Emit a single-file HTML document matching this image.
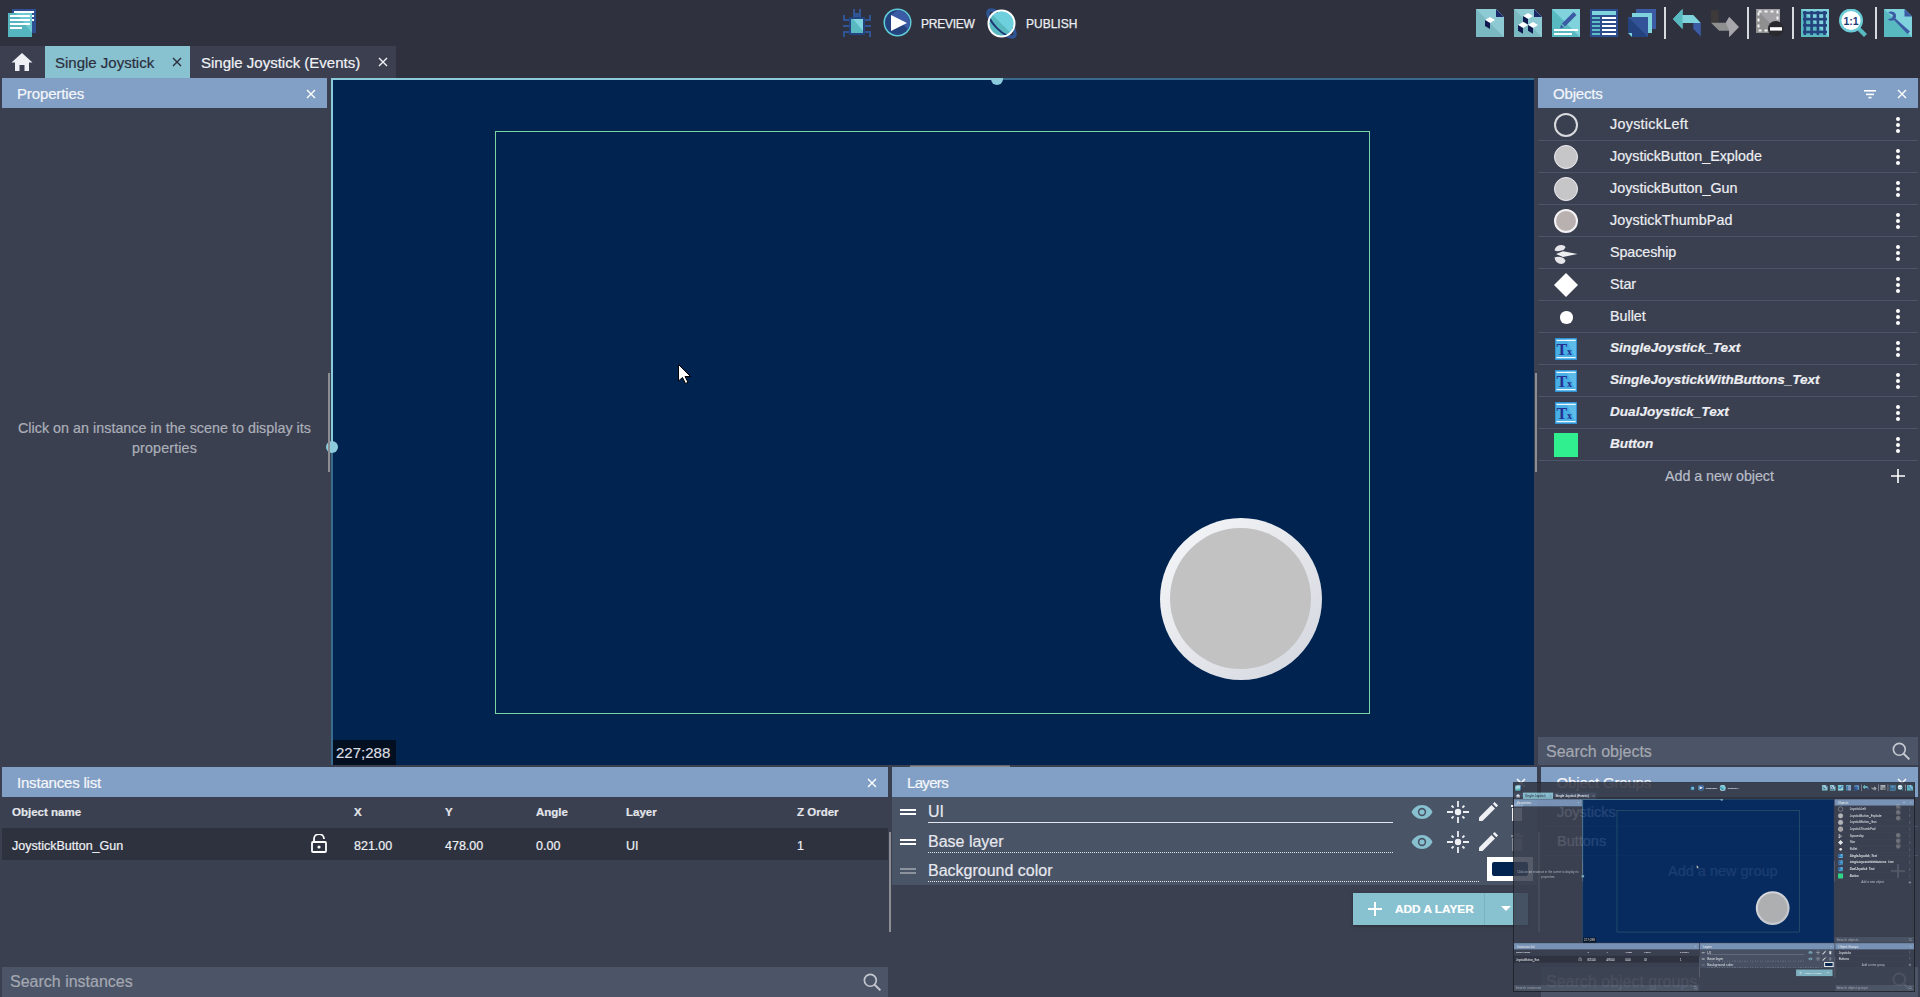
<!DOCTYPE html>
<html><head><meta charset="utf-8"><style>*{box-sizing:border-box;margin:0;padding:0}
html,body{width:1920px;height:997px;overflow:hidden;background:#2f323e;font-family:"Liberation Sans",sans-serif}
.app{position:absolute;left:0;top:0;width:1920px;height:997px;background:#2f323e;overflow:hidden}
.abs{position:absolute}
.t{position:absolute;white-space:nowrap;line-height:1;-webkit-text-stroke:.2px currentColor}
.hdr{position:absolute;background:#82a0c5;height:30px}
.hdr .t{color:#f4f6fa}
.panel{position:absolute;background:#3b4051}
.x{position:absolute;width:10px;height:10px}
.sep{position:absolute;height:1px;background:#4b5569}
.dots{position:absolute;width:4px;height:16px}
</style></head><body>
<svg width="0" height="0" style="position:absolute">
<defs>
<symbol id="ix" viewBox="0 0 10 10"><path d="M1 1L9 9M9 1L1 9" stroke="currentColor" stroke-width="1.4" fill="none"/></symbol>
<symbol id="idots" viewBox="0 0 4 16"><circle cx="2" cy="2" r="2" fill="#fff"/><circle cx="2" cy="8" r="2" fill="#fff"/><circle cx="2" cy="14" r="2" fill="#fff"/></symbol>
<symbol id="itx" viewBox="0 0 24 24"><rect x="0" y="0" width="24" height="24" fill="#2f8fd0"/><rect x="1" y="1" width="22" height="22" fill="#47aee6"/><path d="M12 1h11v22z" fill="#5cbbe9"/><rect x="1.5" y="2" width="21" height="1.3" fill="#eef7fc"/><rect x="1.5" y="20.7" width="21" height="1.3" fill="#eef7fc"/><text x="1.5" y="18" font-family="Liberation Serif" font-size="17.5" font-weight="bold" fill="#24318f">T</text><text x="13.2" y="19" font-family="Liberation Serif" font-size="11" font-weight="bold" fill="#24318f">x</text></symbol>
<symbol id="ieye" viewBox="0 0 24 24"><path d="M12 5C7 5 3 8.5 1.5 12 3 15.5 7 19 12 19s9-3.5 10.5-7C21 8.5 17 5 12 5z" fill="#87c1cf"/><circle cx="12" cy="12" r="4.2" fill="#4a5467"/><circle cx="12" cy="12" r="2.6" fill="#87c1cf"/></symbol>
<symbol id="isun" viewBox="0 0 24 24"><circle cx="12" cy="12" r="3.2" fill="#eef0f4"/><path d="M12 1v6M12 17v6M1 12h6M17 12h6" stroke="#eef0f4" stroke-width="1.8"/><path d="M5.6 5.6l2 2M16.4 16.4l2 2M5.6 18.4l2-2M16.4 7.6l2-2" stroke="#eef0f4" stroke-width="2"/></symbol>
<symbol id="ipen" viewBox="0 0 24 24"><path d="M3 21v-3.5L15.5 5l3.5 3.5L6.5 21z" fill="#eef0f4"/><path d="M16.8 3.7l1.8-1.8 3.5 3.5-1.8 1.8z" fill="#eef0f4"/></symbol>
<symbol id="isearch" viewBox="0 0 24 24"><circle cx="9.5" cy="9.5" r="6.8" stroke="#c4c7cf" stroke-width="1.9" fill="none"/><path d="M14.5 14.5L21 21" stroke="#c4c7cf" stroke-width="2.3"/></symbol>
<symbol id="ihome" viewBox="0 0 24 24"><path d="M12 3L1.5 12.5H5V21h4.5v-6h5v6H19v-8.5h3.5z" fill="#eef0f6"/></symbol>
<symbol id="ihandle" viewBox="0 0 16 10"><rect x="0" y="2" width="16" height="2" fill="currentColor"/><rect x="0" y="6" width="16" height="2" fill="currentColor"/></symbol>
</defs>
</svg>

<div class="app"><!-- toolbar -->
<svg class="abs" style="left:7px;top:8px" width="30" height="30" viewBox="0 0 30 30">
 <rect x="5" y="1" width="24" height="24" fill="#2f4f93"/>
 <rect x="7" y="3" width="20" height="2" fill="#fff"/><rect x="25" y="7" width="2" height="2" fill="#fff"/><rect x="25" y="11" width="2" height="2" fill="#fff"/>
 <rect x="1" y="5" width="24" height="24" fill="#56b6bf"/>
 <path d="M9 5h16v20z" fill="#6fcad3"/>
 <rect x="3" y="7" width="20" height="2" fill="#fff"/><rect x="3" y="11" width="20" height="2" fill="#fff"/><rect x="3" y="15" width="20" height="2" fill="#fff"/><rect x="3" y="19" width="12" height="2" fill="#fff"/>
</svg>
<svg class="abs" style="left:843px;top:9px" width="28" height="28" viewBox="0 0 28 28">
 <g fill="#2f5595"><rect x="10" y="0" width="2" height="8"/><rect x="16" y="0" width="2" height="8"/><rect x="10" y="4" width="8" height="5"/>
 <rect x="0" y="6" width="2" height="6"/><rect x="0" y="10" width="6" height="2"/><rect x="26" y="6" width="2" height="6"/><rect x="22" y="10" width="6" height="2"/>
 <rect x="0" y="16" width="6" height="2"/><rect x="22" y="16" width="6" height="2"/>
 <rect x="0" y="22" width="6" height="2"/><rect x="0" y="22" width="2" height="6"/><rect x="22" y="22" width="6" height="2"/><rect x="26" y="22" width="2" height="6"/>
 <rect x="6" y="8" width="16" height="18" fill="#23427f"/></g>
 <rect x="8" y="10" width="12" height="14" fill="#58b9c0"/><path d="M10 10h10v12z" fill="#7fd3dc"/>
</svg>
<svg class="abs" style="left:883px;top:8px" width="29" height="29" viewBox="0 0 29 29">
 <circle cx="14.5" cy="14.5" r="14" fill="#5fcdd8"/><circle cx="14.5" cy="14.5" r="12.5" fill="#24427e"/>
 <path d="M14.5 2A12.5 12.5 0 0 1 25 21L8 7z" fill="#3b5ba4"/>
 <path d="M8 7L24 15 8 23z" fill="#fff"/>
</svg>
<div class="t" style="left:921px;top:18px;font-size:12.0px;letter-spacing:-0.263px;color:#eceef2;-webkit-text-stroke:.25px #eceef2">PREVIEW</div>
<svg class="abs" style="left:986px;top:8px" width="31" height="31" viewBox="0 0 31 31">
 <defs><clipPath id="pclip"><circle cx="15.5" cy="15.5" r="12"/></clipPath></defs>
 <ellipse cx="15.5" cy="15.5" rx="18" ry="6.5" transform="rotate(45 15.5 15.5)" stroke="#2f5595" stroke-width="3.5" fill="none"/>
 <circle cx="15.5" cy="15.5" r="14" fill="#fff"/><circle cx="15.5" cy="15.5" r="11.8" fill="#6dd0dc"/>
 <g clip-path="url(#pclip)"><path d="M0 0L31 31H0z" fill="#58b9c0"/><ellipse cx="15.5" cy="15.5" rx="18" ry="6.5" transform="rotate(45 15.5 15.5)" stroke="#1e3b78" stroke-width="2" fill="none"/><path d="M0 0L31 31L31 0z" fill="#6dd0dc"/><path d="M-5 12L19 36L0 36z" fill="#6dd0dc" opacity="0"/></g>
</svg>
<div class="t" style="left:1026px;top:18px;font-size:12px;color:#eceef2;-webkit-text-stroke:.25px #eceef2">PUBLISH</div>

<svg class="abs" style="left:1476px;top:9px" width="28" height="28" viewBox="0 0 28 28">
 <path d="M0 0h20l8 8v20H0z" fill="#7ab8c2"/><path d="M0 0h20l8 8v20z" fill="#8ecad4"/><path d="M20 0l8 8h-8z" fill="#1d2a6a"/>
 <path d="M9 11l5-3 5 3-5 3z" fill="#fff"/><path d="M9 11l5 3v6l-5-3z" fill="#111a4e"/>
</svg>
<svg class="abs" style="left:1514px;top:9px" width="28" height="28" viewBox="0 0 28 28">
 <path d="M0 0h20l8 8v20H0z" fill="#7ab8c2"/><path d="M0 0h20l8 8v20z" fill="#8ecad4"/><path d="M20 0l8 8h-8z" fill="#1d2a6a"/>
 <path d="M9 7l5-3 5 3-5 3z" fill="#fff"/><path d="M9 7l5 3v5.5l-5-3z" fill="#111a4e"/>
 <path d="M4 16l5-3 5 3-5 3z" fill="#fff"/><path d="M4 16l5 3v5.7l-5-3z" fill="#111a4e"/>
 <path d="M14 16l5-3 5 3-5 3z" fill="#fff"/><path d="M14 16l5 3v5.7l-5-3z" fill="#111a4e"/>
</svg>
<svg class="abs" style="left:1552px;top:9px" width="28" height="28" viewBox="0 0 28 28">
 <rect width="28" height="28" fill="#58b9c0"/><path d="M0 0h28v28z" fill="#80d3dd"/>
 <path d="M10 14.5L21.5 3l3 3L13 17.5z" fill="#3b5ba4"/><path d="M9 15.5l3 3L8 19.5z" fill="#3b5ba4"/>
 <rect x="2" y="20" width="24" height="2" fill="#fff"/><rect x="2" y="24" width="18" height="2" fill="#fff"/>
</svg>
<svg class="abs" style="left:1590px;top:9px" width="28" height="28" viewBox="0 0 28 28">
 <rect width="28" height="28" fill="#2e4d8e"/><rect x="2" y="2" width="24" height="4" fill="#7fd3dc"/>
 <g fill="#5cbfc6"><rect x="2" y="8" width="8" height="2"/><rect x="2" y="12" width="8" height="2"/><rect x="2" y="16" width="8" height="2"/><rect x="2" y="20" width="8" height="2"/><rect x="2" y="24" width="8" height="2"/></g>
 <g fill="#fff"><rect x="12" y="8" width="14" height="2"/><rect x="12" y="12" width="14" height="2"/><rect x="12" y="16" width="14" height="2"/><rect x="12" y="20" width="14" height="2"/><rect x="12" y="24" width="14" height="2"/></g>
</svg>
<svg class="abs" style="left:1628px;top:9px" width="29" height="28" viewBox="0 0 29 28">
 <rect x="8" y="0" width="20" height="20" fill="#3b5ba4"/><rect x="4" y="4" width="20" height="20" fill="#7fd3dc"/>
 <path d="M0 8h20v20H4L0 24z" fill="#24427e"/><path d="M0 8h20v20z" fill="#3b5ba4" opacity=".7"/><path d="M0 24l4 4v-4z" fill="#7fd3dc"/>
</svg>
<div class="abs" style="left:1664px;top:7px;width:2px;height:32px;background:#d6d9de"></div>
<svg class="abs" style="left:1673px;top:9px" width="28" height="28" viewBox="0 0 28 28">
 <path d="M0 10L9.5 0v6h10.8l7.5 8H9.5v6z" fill="#7fd3dc"/><path d="M0 10L9.5 0v20z" fill="#58b9c0"/>
 <path d="M20.3 14h7.5v13.5L20.3 20z" fill="#3b5ba4"/>
</svg>
<svg class="abs" style="left:1711px;top:9px" width="28" height="28" viewBox="0 0 28 28">
 <path d="M0 1.3h7.5v12.5H0z" fill="#3e3a3a"/>
 <path d="M0 13.8h14.8l3.4-5.9 9.6 10-9.6 10v-6.2H8.2z" fill="#8f8f90"/><path d="M14.8 13.8l3.4-5.9 9.6 10-9.6 10v-6.2z" fill="#a6a6ac"/>
</svg>
<div class="abs" style="left:1747px;top:7px;width:2px;height:32px;background:#d6d9de"></div>
<svg class="abs" style="left:1756px;top:9px" width="29" height="29" viewBox="0 0 29 29">
 <rect width="24" height="24" fill="#8f8f90"/><path d="M0 0h24v24z" fill="#a3a3a7"/>
 <rect x="2.5" y="2.5" width="19" height="19" fill="none" stroke="#f4f4f6" stroke-width="2" stroke-dasharray="3 3"/>
 <circle cx="19.7" cy="19.8" r="7.8" fill="#2a2a2e"/><rect x="14" y="18.2" width="12" height="3.4" fill="#fff"/>
</svg>
<div class="abs" style="left:1792px;top:7px;width:2px;height:32px;background:#d6d9de"></div>
<svg class="abs" style="left:1801px;top:9px" width="28" height="28" viewBox="0 0 28 28">
 <rect width="28" height="28" fill="#58b9c0"/><path d="M0 0h28v28z" fill="#80d3dd"/>
 <g fill="#24427e"><rect x="2.6" y="2" width="2.6" height="24"/><rect x="9.3" y="2" width="2.6" height="24"/><rect x="15.6" y="2" width="2.6" height="24"/><rect x="22.2" y="2" width="2.6" height="24"/>
 <rect x="2" y="2.6" width="24" height="2.6"/><rect x="2" y="8.9" width="24" height="2.6"/><rect x="2" y="15.1" width="24" height="2.6"/><rect x="2" y="21.7" width="24" height="2.6"/></g>
</svg>
<svg class="abs" style="left:1839px;top:9px" width="29" height="29" viewBox="0 0 29 29">
 <path d="M19 19L26.5 26.5" stroke="#58b9c0" stroke-width="4.2"/>
 <circle cx="12" cy="11.5" r="12" fill="#6dcbd6"/><circle cx="12" cy="11.5" r="9.6" fill="#fff"/>
 <text x="12" y="15.8" text-anchor="middle" font-family="Liberation Sans" font-weight="bold" font-size="10.5" fill="#1e3b78">1:1</text>
</svg>
<div class="abs" style="left:1875px;top:7px;width:2px;height:32px;background:#d6d9de"></div>
<svg class="abs" style="left:1884px;top:9px" width="28" height="28" viewBox="0 0 28 28">
 <path d="M0 0h20.5l7.5 7.5V28H0z" fill="#58b9c0"/><path d="M0 0h20.5l7.5 7.5V28z" fill="#80d3dd"/><path d="M20.5 0l7.5 7.5h-7.5z" fill="#3b5ba4"/>
 <path d="M4 3.5Q7 1.5 10.5 3.5Q13 6 11.5 9.5L26 22.5L23.5 25L10 11Q6.5 12.5 3.5 10.5L8 9L9 6z" fill="#3b5ba4"/>
</svg>

<!-- tabs -->
<div class="abs" style="left:0;top:46px;width:45px;height:32px;background:#3b3f50"></div>
<svg class="abs" style="left:10px;top:50px" width="24" height="24" viewBox="0 0 24 24"><use href="#ihome"/></svg>
<div class="abs" style="left:45px;top:46px;width:145px;height:32px;background:#88c1d0"></div>
<div class="t" style="left:55px;top:55px;font-size:15px;color:#2b2f3c">Single Joystick</div>
<svg class="x" style="left:172px;top:57px;color:#2b2f3c" viewBox="0 0 10 10"><use href="#ix"/></svg>
<div class="abs" style="left:190px;top:46px;width:206px;height:32px;background:#3b3f50"></div>
<div class="t" style="left:201px;top:55px;font-size:15px;color:#f0f2f6">Single Joystick (Events)</div>
<svg class="x" style="left:378px;top:57px;color:#f0f2f6" viewBox="0 0 10 10"><use href="#ix"/></svg>

<!-- left properties panel -->
<div class="panel" style="left:0;top:78px;width:331px;height:689px"></div>
<div class="hdr" style="left:2px;top:78px;width:325px"><div class="t" style="left:15px;top:8px;font-size:15.0px;letter-spacing:-0.137px">Properties</div></div>
<svg class="x" style="left:306px;top:89px;color:#fff" viewBox="0 0 10 10"><use href="#ix"/></svg>
<div class="t" style="left:0;top:421px;width:329px;text-align:center;font-size:14.3px;letter-spacing:0.027px;color:#abafb8">Click on an instance in the scene to display its</div><div class="t" style="left:0;top:441px;width:329px;text-align:center;font-size:14.3px;letter-spacing:0.141px;color:#abafb8">properties</div>


<!-- canvas -->
<div class="abs" style="left:331px;top:78px;width:1203px;height:687px;background:#002350"></div>
<div class="abs" style="left:331px;top:78px;width:1203px;height:2px;background:#386b8e"></div>
<div class="abs" style="left:331px;top:78px;width:672px;height:2px;background:#8ccbdc"></div>
<div class="abs" style="left:331px;top:78px;width:2px;height:687px;background:#386b8e"></div>
<div class="abs" style="left:331px;top:78px;width:2px;height:369px;background:#8ccbdc"></div>
<div class="abs" style="left:991px;top:78px;width:12px;height:7px;border-radius:0 0 6px 6px;background:#8ccbdc"></div>
<div class="abs" style="left:326px;top:441px;width:12px;height:12px;border-radius:6px;background:#8ccbdc"></div><div class="abs" style="left:328px;top:373px;width:2px;height:99px;background:#8c8e93"></div><div class="abs" style="left:0;top:78px;width:331px;height:0"></div>
<div class="abs" style="left:495px;top:131px;width:875px;height:583px;border:1px solid #7dd3a2"></div>
<div class="abs" style="left:1160px;top:518px;width:162px;height:162px;border-radius:50%;background:linear-gradient(135deg,#f6f7f9,#d3d6de)"></div>
<div class="abs" style="left:1170px;top:528px;width:141px;height:141px;border-radius:50%;background:#c2c2c2"></div>
<svg class="abs" style="left:678px;top:364px" width="14" height="20" viewBox="0 0 14 20"><path d="M0.5 0.5V17l4-3.5 3 6 2.5-1.2-3-5.8h5.5z" fill="#fff" stroke="#000" stroke-width="1"/></svg>
<div class="abs" style="left:333px;top:740px;width:63px;height:25px;background:#020f20"></div>
<div class="t" style="left:336px;top:745px;font-size:15px;color:#dcdee2">227;288</div>

<!-- right objects panel -->
<div class="panel" style="left:1534px;top:78px;width:386px;height:689px"></div>
<div class="abs" style="left:1535px;top:373px;width:2px;height:99px;background:#8c8e93"></div>
<div class="hdr" style="left:1538px;top:78px;width:380px"><div class="t" style="left:15px;top:8px;font-size:15.0px;letter-spacing:-0.179px">Objects</div></div>
<svg class="abs" style="left:1862px;top:88px" width="14" height="12" viewBox="0 0 14 12"><rect x="2" y="2" width="12" height="1.6" fill="#fff"/><rect x="4" y="5.6" width="8" height="1.6" fill="#fff"/><rect x="6.5" y="8.8" width="3" height="1.6" fill="#fff"/></svg>
<svg class="x" style="left:1897px;top:89px;color:#fff" viewBox="0 0 10 10"><use href="#ix"/></svg>
<div class="abs" style="left:1554px;top:113px;width:24px;height:24px;border-radius:50%;border:2px solid #d8dade"></div><div class="t" style="left:1610px;top:117px;font-size:14.3px;letter-spacing:0.300px;color:#eceef2">JoystickLeft</div><svg class="abs" style="left:1896px;top:117px" width="4" height="16" viewBox="0 0 4 16"><use href="#idots"/></svg><div class="sep" style="left:1538px;top:140px;width:380px"></div>
<div class="abs" style="left:1554px;top:145px;width:24px;height:24px;border-radius:50%;background:#c6c6c8;border:1.5px solid #eceef0"></div><div class="t" style="left:1610px;top:149px;font-size:14.3px;letter-spacing:0.003px;color:#eceef2">JoystickButton_Explode</div><svg class="abs" style="left:1896px;top:149px" width="4" height="16" viewBox="0 0 4 16"><use href="#idots"/></svg><div class="sep" style="left:1538px;top:172px;width:380px"></div>
<div class="abs" style="left:1554px;top:177px;width:24px;height:24px;border-radius:50%;background:#c6c6c8;border:1.5px solid #eceef0"></div><div class="t" style="left:1610px;top:181px;font-size:14.3px;letter-spacing:0.018px;color:#eceef2">JoystickButton_Gun</div><svg class="abs" style="left:1896px;top:181px" width="4" height="16" viewBox="0 0 4 16"><use href="#idots"/></svg><div class="sep" style="left:1538px;top:204px;width:380px"></div>
<div class="abs" style="left:1554px;top:209px;width:24px;height:24px;border-radius:50%;background:#b9b0b0;border:2px solid #f2f2f4"></div><div class="t" style="left:1610px;top:213px;font-size:14.3px;letter-spacing:0.118px;color:#eceef2">JoystickThumbPad</div><svg class="abs" style="left:1896px;top:213px" width="4" height="16" viewBox="0 0 4 16"><use href="#idots"/></svg><div class="sep" style="left:1538px;top:236px;width:380px"></div>
<svg class="abs" style="left:1554px;top:237px" width="26" height="30" viewBox="0 0 26 30"><path d="M0.5 13.5Q1.5 8 7.5 8Q11 8.3 11.5 10.5L9.5 13Q4 15 0.5 13.5z" fill="#e6e6ea"/><path d="M2 17L9 14.3L23.5 17L9 20z" fill="#ededf0"/><path d="M0.5 20.5Q4 19 9.5 21L11.5 23.5Q11 26.5 7.5 27Q1.5 27 0.5 20.5z" fill="#e6e6ea"/></svg><div class="t" style="left:1610px;top:245px;font-size:14.3px;letter-spacing:-0.065px;color:#eceef2">Spaceship</div><svg class="abs" style="left:1896px;top:245px" width="4" height="16" viewBox="0 0 4 16"><use href="#idots"/></svg><div class="sep" style="left:1538px;top:268px;width:380px"></div>
<svg class="abs" style="left:1554px;top:273px" width="24" height="24" viewBox="0 0 24 24"><path d="M12 0L24 12 12 24 0 12z" fill="#fff"/></svg><div class="t" style="left:1610px;top:277px;font-size:14.3px;letter-spacing:-0.057px;color:#eceef2">Star</div><svg class="abs" style="left:1896px;top:277px" width="4" height="16" viewBox="0 0 4 16"><use href="#idots"/></svg><div class="sep" style="left:1538px;top:300px;width:380px"></div>
<div class="abs" style="left:1560px;top:311px;width:12.5px;height:12.5px;border-radius:50%;background:#fff"></div><div class="t" style="left:1610px;top:309px;font-size:14.3px;letter-spacing:0.005px;color:#eceef2">Bullet</div><svg class="abs" style="left:1896px;top:309px" width="4" height="16" viewBox="0 0 4 16"><use href="#idots"/></svg><div class="sep" style="left:1538px;top:332px;width:380px"></div>
<svg class="abs" style="left:1555px;top:338px" width="22" height="22" viewBox="0 0 24 24"><use href="#itx"/></svg><div class="t" style="left:1610px;top:341px;font-size:13.55px;letter-spacing:0.027px;font-weight:bold;font-style:italic;color:#eceef2">SingleJoystick_Text</div><svg class="abs" style="left:1896px;top:341px" width="4" height="16" viewBox="0 0 4 16"><use href="#idots"/></svg><div class="sep" style="left:1538px;top:364px;width:380px"></div>
<svg class="abs" style="left:1555px;top:370px" width="22" height="22" viewBox="0 0 24 24"><use href="#itx"/></svg><div class="t" style="left:1610px;top:373px;font-size:13.55px;letter-spacing:-0.023px;font-weight:bold;font-style:italic;color:#eceef2">SingleJoystickWithButtons_Text</div><svg class="abs" style="left:1896px;top:373px" width="4" height="16" viewBox="0 0 4 16"><use href="#idots"/></svg><div class="sep" style="left:1538px;top:396px;width:380px"></div>
<svg class="abs" style="left:1555px;top:402px" width="22" height="22" viewBox="0 0 24 24"><use href="#itx"/></svg><div class="t" style="left:1610px;top:405px;font-size:13.55px;letter-spacing:0.018px;font-weight:bold;font-style:italic;color:#eceef2">DualJoystick_Text</div><svg class="abs" style="left:1896px;top:405px" width="4" height="16" viewBox="0 0 4 16"><use href="#idots"/></svg><div class="sep" style="left:1538px;top:428px;width:380px"></div>
<div class="abs" style="left:1554px;top:433px;width:24px;height:24px;background:#2fef8f"></div><div class="t" style="left:1610px;top:437px;font-size:13.55px;letter-spacing:-0.074px;font-weight:bold;font-style:italic;color:#eceef2">Button</div><svg class="abs" style="left:1896px;top:437px" width="4" height="16" viewBox="0 0 4 16"><use href="#idots"/></svg><div class="sep" style="left:1538px;top:460px;width:380px"></div>
<div class="t" style="left:1665px;top:469px;font-size:14.3px;letter-spacing:-0.051px;color:#b9bdc7">Add a new object</div><svg class="abs" style="left:1890px;top:468px" width="16" height="16" viewBox="0 0 16 16"><path d="M8 1v14M1 8h14" stroke="#fff" stroke-width="1.6"/></svg>
<div class="abs" style="left:1538px;top:737px;width:380px;height:28px;background:#4c5567"></div>
<div class="t" style="left:1546px;top:744px;font-size:16px;color:#a4a8b2">Search objects</div>
<svg class="abs" style="left:1891px;top:741px" width="21" height="21" viewBox="0 0 24 24"><use href="#isearch"/></svg>

<!-- bottom panels -->
<div class="panel" style="left:0;top:765px;width:1920px;height:232px"></div>
<div class="hdr" style="left:2px;top:767px;width:886px"><div class="t" style="left:15px;top:8px;font-size:15.0px;letter-spacing:-0.193px">Instances list</div></div>
<svg class="x" style="left:867px;top:778px;color:#fff" viewBox="0 0 10 10"><use href="#ix"/></svg>
<div class="t" style="left:12px;top:806.5px;font-size:11.5px;font-weight:bold;color:#e3e5ea">Object name</div>
<div class="t" style="left:354px;top:806.5px;font-size:11.5px;font-weight:bold;color:#e3e5ea">X</div>
<div class="t" style="left:445px;top:806.5px;font-size:11.5px;font-weight:bold;color:#e3e5ea">Y</div>
<div class="t" style="left:536px;top:806.5px;font-size:11.5px;font-weight:bold;color:#e3e5ea">Angle</div>
<div class="t" style="left:626px;top:806.5px;font-size:11.5px;font-weight:bold;color:#e3e5ea">Layer</div>
<div class="t" style="left:797px;top:806.5px;font-size:11.5px;font-weight:bold;color:#e3e5ea">Z Order</div>
<div class="abs" style="left:2px;top:828px;width:886px;height:32px;background:#2e323f"></div>
<div class="t" style="left:12px;top:840px;font-size:12.5px;color:#eef0f4">JoystickButton_Gun</div>
<svg class="abs" style="left:310px;top:834px" width="18" height="19" viewBox="0 0 18 19"><path d="M4 8V5a5 5 0 0 1 10 0" stroke="#fff" stroke-width="1.8" fill="none"/><rect x="2" y="8" width="14" height="10" rx="1" stroke="#fff" stroke-width="1.8" fill="none"/><circle cx="9" cy="13" r="1.6" fill="#fff"/></svg>
<div class="t" style="left:354px;top:840px;font-size:12.5px;color:#eef0f4">821.00</div>
<div class="t" style="left:445px;top:840px;font-size:12.5px;color:#eef0f4">478.00</div>
<div class="t" style="left:536px;top:840px;font-size:12.5px;color:#eef0f4">0.00</div>
<div class="t" style="left:626px;top:840px;font-size:12.5px;color:#eef0f4">UI</div>
<div class="t" style="left:797px;top:840px;font-size:12.5px;color:#eef0f4">1</div>
<div class="abs" style="left:889px;top:832px;width:2px;height:100px;background:#8c8e93"></div>
<div class="abs" style="left:2px;top:967px;width:886px;height:30px;background:#4c5567"></div>
<div class="t" style="left:10px;top:974px;font-size:16px;color:#a4a8b2">Search instances</div>
<svg class="abs" style="left:862px;top:972px" width="21" height="21" viewBox="0 0 24 24"><use href="#isearch"/></svg>

<div class="abs" style="left:910px;top:765px;width:100px;height:2px;background:linear-gradient(#55575e,#97989c)"></div>
<!-- layers -->
<div class="hdr" style="left:892px;top:767px;width:645px"><div class="t" style="left:15px;top:8px;font-size:15.0px;letter-spacing:-0.671px">Layers</div></div>
<svg class="x" style="left:1516px;top:778px;color:#fff" viewBox="0 0 10 10"><use href="#ix"/></svg>
<div class="abs" style="left:892px;top:797px;width:645px;height:88px;background:#4a5467"></div>
<svg class="abs" style="left:900px;top:807px;color:#fff" width="16" height="10" viewBox="0 0 16 10"><use href="#ihandle"/></svg>
<div class="t" style="left:928px;top:804px;font-size:16px;color:#e6e8ee">UI</div>
<div class="abs" style="left:928px;top:822px;width:465px;height:1px;background:#e3e6ec"></div>
<svg class="abs" style="left:1410px;top:800px" width="24" height="24" viewBox="0 0 24 24"><use href="#ieye"/></svg>
<svg class="abs" style="left:1446px;top:800px" width="24" height="24" viewBox="0 0 24 24"><use href="#isun"/></svg>
<svg class="abs" style="left:1476px;top:800px" width="24" height="24" viewBox="0 0 24 24"><use href="#ipen"/></svg>
<svg class="abs" style="left:1510px;top:803px" width="14" height="18" viewBox="0 0 14 18"><path d="M1 2h12v2H1zM4 0h6v2H4zM2 5h10v13H2z" fill="#eef0f4"/></svg><svg class="abs" style="left:1510px;top:833px;opacity:.35" width="14" height="18" viewBox="0 0 14 18"><path d="M1 2h12v2H1zM4 0h6v2H4zM2 5h10v13H2z" fill="#eef0f4"/></svg>
<svg class="abs" style="left:900px;top:837px;color:#fff" width="16" height="10" viewBox="0 0 16 10"><use href="#ihandle"/></svg>
<div class="t" style="left:928px;top:834px;font-size:16px;color:#e6e8ee">Base layer</div>
<div class="abs" style="left:928px;top:852px;width:465px;height:1px;background:repeating-linear-gradient(90deg,#e3e6ec 0 1px,transparent 1px 2px)"></div>
<svg class="abs" style="left:1410px;top:830px" width="24" height="24" viewBox="0 0 24 24"><use href="#ieye"/></svg>
<svg class="abs" style="left:1446px;top:830px" width="24" height="24" viewBox="0 0 24 24"><use href="#isun"/></svg>
<svg class="abs" style="left:1476px;top:830px" width="24" height="24" viewBox="0 0 24 24"><use href="#ipen"/></svg>
<svg class="abs" style="left:900px;top:866px;color:#8d939e" width="16" height="10" viewBox="0 0 16 10"><use href="#ihandle"/></svg>
<div class="t" style="left:928px;top:863px;font-size:16px;color:#e6e8ee">Background color</div>
<div class="abs" style="left:928px;top:881px;width:552px;height:1px;background:repeating-linear-gradient(90deg,#e3e6ec 0 1px,transparent 1px 2px)"></div>
<div class="abs" style="left:1487px;top:857px;width:46px;height:24px;background:#fff"></div>
<div class="abs" style="left:1492px;top:862px;width:36px;height:14px;border-radius:2px;background:#002350"></div>
<div class="abs" style="left:1353px;top:893px;width:175px;height:32px;background:#88c1d0;box-shadow:0 1px 3px rgba(0,0,0,.35)"></div>
<div class="abs" style="left:1484px;top:893px;width:1px;height:32px;background:#7ab2c0"></div>
<svg class="abs" style="left:1367px;top:901px" width="16" height="16" viewBox="0 0 16 16"><path d="M8 1v14M1 8h14" stroke="#fff" stroke-width="2"/></svg>
<div class="t" style="left:1395px;top:904px;font-size:11.8px;font-weight:bold;color:#fff">ADD A LAYER</div>
<svg class="abs" style="left:1500px;top:905px" width="12" height="8" viewBox="0 0 12 8"><path d="M1 1h10L6 6z" fill="#fff"/></svg>

<div class="abs" style="left:1538px;top:832px;width:2px;height:100px;background:#8c8e93"></div>
<!-- object groups -->
<div class="hdr" style="left:1541px;top:767px;width:377px"><div class="t" style="left:15.6px;top:8px;font-size:15.0px;letter-spacing:-0.170px">Object Groups</div></div>
<svg class="x" style="left:1897px;top:778px;color:#fff" viewBox="0 0 10 10"><use href="#ix"/></svg>
<div class="t" style="left:1557px;top:805px;font-size:14.5px;color:#eef0f4">Joysticks</div>
<svg class="abs" style="left:1896px;top:804px" width="4" height="16" viewBox="0 0 4 16"><use href="#idots"/></svg>
<div class="sep" style="left:1541px;top:826px;width:377px"></div>
<div class="t" style="left:1557px;top:834px;font-size:14.5px;color:#eef0f4">Buttons</div>
<svg class="abs" style="left:1896px;top:833px" width="4" height="16" viewBox="0 0 4 16"><use href="#idots"/></svg>
<div class="sep" style="left:1541px;top:855px;width:377px"></div>
<div class="t" style="left:1668px;top:864px;font-size:14.5px;color:#b9bdc7">Add a new group</div>
<svg class="abs" style="left:1890px;top:863px" width="16" height="16" viewBox="0 0 16 16"><path d="M8 1v14M1 8h14" stroke="#fff" stroke-width="1.6"/></svg>
<div class="abs" style="left:1541px;top:967px;width:377px;height:30px;background:#4c5567"></div>
<div class="t" style="left:1546px;top:974px;font-size:16px;color:#a4a8b2">Search object groups</div>
<svg class="abs" style="left:1891px;top:971px" width="21" height="21" viewBox="0 0 24 24"><use href="#isearch"/></svg>
</div>
<div class="abs" style="left:1513px;top:782px;width:402px;height:210px;overflow:hidden;opacity:.86">
<div class="app" style="transform:translate(0.5px,1px) scale(0.20885);transform-origin:0 0"><!-- toolbar -->
<svg class="abs" style="left:7px;top:8px" width="30" height="30" viewBox="0 0 30 30">
 <rect x="5" y="1" width="24" height="24" fill="#2f4f93"/>
 <rect x="7" y="3" width="20" height="2" fill="#fff"/><rect x="25" y="7" width="2" height="2" fill="#fff"/><rect x="25" y="11" width="2" height="2" fill="#fff"/>
 <rect x="1" y="5" width="24" height="24" fill="#56b6bf"/>
 <path d="M9 5h16v20z" fill="#6fcad3"/>
 <rect x="3" y="7" width="20" height="2" fill="#fff"/><rect x="3" y="11" width="20" height="2" fill="#fff"/><rect x="3" y="15" width="20" height="2" fill="#fff"/><rect x="3" y="19" width="12" height="2" fill="#fff"/>
</svg>
<svg class="abs" style="left:843px;top:9px" width="28" height="28" viewBox="0 0 28 28">
 <g fill="#2f5595"><rect x="10" y="0" width="2" height="8"/><rect x="16" y="0" width="2" height="8"/><rect x="10" y="4" width="8" height="5"/>
 <rect x="0" y="6" width="2" height="6"/><rect x="0" y="10" width="6" height="2"/><rect x="26" y="6" width="2" height="6"/><rect x="22" y="10" width="6" height="2"/>
 <rect x="0" y="16" width="6" height="2"/><rect x="22" y="16" width="6" height="2"/>
 <rect x="0" y="22" width="6" height="2"/><rect x="0" y="22" width="2" height="6"/><rect x="22" y="22" width="6" height="2"/><rect x="26" y="22" width="2" height="6"/>
 <rect x="6" y="8" width="16" height="18" fill="#23427f"/></g>
 <rect x="8" y="10" width="12" height="14" fill="#58b9c0"/><path d="M10 10h10v12z" fill="#7fd3dc"/>
</svg>
<svg class="abs" style="left:883px;top:8px" width="29" height="29" viewBox="0 0 29 29">
 <circle cx="14.5" cy="14.5" r="14" fill="#5fcdd8"/><circle cx="14.5" cy="14.5" r="12.5" fill="#24427e"/>
 <path d="M14.5 2A12.5 12.5 0 0 1 25 21L8 7z" fill="#3b5ba4"/>
 <path d="M8 7L24 15 8 23z" fill="#fff"/>
</svg>
<div class="t" style="left:921px;top:18px;font-size:12.0px;letter-spacing:-0.263px;color:#eceef2;-webkit-text-stroke:.25px #eceef2">PREVIEW</div>
<svg class="abs" style="left:986px;top:8px" width="31" height="31" viewBox="0 0 31 31">
 <defs><clipPath id="pclip"><circle cx="15.5" cy="15.5" r="12"/></clipPath></defs>
 <ellipse cx="15.5" cy="15.5" rx="18" ry="6.5" transform="rotate(45 15.5 15.5)" stroke="#2f5595" stroke-width="3.5" fill="none"/>
 <circle cx="15.5" cy="15.5" r="14" fill="#fff"/><circle cx="15.5" cy="15.5" r="11.8" fill="#6dd0dc"/>
 <g clip-path="url(#pclip)"><path d="M0 0L31 31H0z" fill="#58b9c0"/><ellipse cx="15.5" cy="15.5" rx="18" ry="6.5" transform="rotate(45 15.5 15.5)" stroke="#1e3b78" stroke-width="2" fill="none"/><path d="M0 0L31 31L31 0z" fill="#6dd0dc"/><path d="M-5 12L19 36L0 36z" fill="#6dd0dc" opacity="0"/></g>
</svg>
<div class="t" style="left:1026px;top:18px;font-size:12px;color:#eceef2;-webkit-text-stroke:.25px #eceef2">PUBLISH</div>

<svg class="abs" style="left:1476px;top:9px" width="28" height="28" viewBox="0 0 28 28">
 <path d="M0 0h20l8 8v20H0z" fill="#7ab8c2"/><path d="M0 0h20l8 8v20z" fill="#8ecad4"/><path d="M20 0l8 8h-8z" fill="#1d2a6a"/>
 <path d="M9 11l5-3 5 3-5 3z" fill="#fff"/><path d="M9 11l5 3v6l-5-3z" fill="#111a4e"/>
</svg>
<svg class="abs" style="left:1514px;top:9px" width="28" height="28" viewBox="0 0 28 28">
 <path d="M0 0h20l8 8v20H0z" fill="#7ab8c2"/><path d="M0 0h20l8 8v20z" fill="#8ecad4"/><path d="M20 0l8 8h-8z" fill="#1d2a6a"/>
 <path d="M9 7l5-3 5 3-5 3z" fill="#fff"/><path d="M9 7l5 3v5.5l-5-3z" fill="#111a4e"/>
 <path d="M4 16l5-3 5 3-5 3z" fill="#fff"/><path d="M4 16l5 3v5.7l-5-3z" fill="#111a4e"/>
 <path d="M14 16l5-3 5 3-5 3z" fill="#fff"/><path d="M14 16l5 3v5.7l-5-3z" fill="#111a4e"/>
</svg>
<svg class="abs" style="left:1552px;top:9px" width="28" height="28" viewBox="0 0 28 28">
 <rect width="28" height="28" fill="#58b9c0"/><path d="M0 0h28v28z" fill="#80d3dd"/>
 <path d="M10 14.5L21.5 3l3 3L13 17.5z" fill="#3b5ba4"/><path d="M9 15.5l3 3L8 19.5z" fill="#3b5ba4"/>
 <rect x="2" y="20" width="24" height="2" fill="#fff"/><rect x="2" y="24" width="18" height="2" fill="#fff"/>
</svg>
<svg class="abs" style="left:1590px;top:9px" width="28" height="28" viewBox="0 0 28 28">
 <rect width="28" height="28" fill="#2e4d8e"/><rect x="2" y="2" width="24" height="4" fill="#7fd3dc"/>
 <g fill="#5cbfc6"><rect x="2" y="8" width="8" height="2"/><rect x="2" y="12" width="8" height="2"/><rect x="2" y="16" width="8" height="2"/><rect x="2" y="20" width="8" height="2"/><rect x="2" y="24" width="8" height="2"/></g>
 <g fill="#fff"><rect x="12" y="8" width="14" height="2"/><rect x="12" y="12" width="14" height="2"/><rect x="12" y="16" width="14" height="2"/><rect x="12" y="20" width="14" height="2"/><rect x="12" y="24" width="14" height="2"/></g>
</svg>
<svg class="abs" style="left:1628px;top:9px" width="29" height="28" viewBox="0 0 29 28">
 <rect x="8" y="0" width="20" height="20" fill="#3b5ba4"/><rect x="4" y="4" width="20" height="20" fill="#7fd3dc"/>
 <path d="M0 8h20v20H4L0 24z" fill="#24427e"/><path d="M0 8h20v20z" fill="#3b5ba4" opacity=".7"/><path d="M0 24l4 4v-4z" fill="#7fd3dc"/>
</svg>
<div class="abs" style="left:1664px;top:7px;width:2px;height:32px;background:#d6d9de"></div>
<svg class="abs" style="left:1673px;top:9px" width="28" height="28" viewBox="0 0 28 28">
 <path d="M0 10L9.5 0v6h10.8l7.5 8H9.5v6z" fill="#7fd3dc"/><path d="M0 10L9.5 0v20z" fill="#58b9c0"/>
 <path d="M20.3 14h7.5v13.5L20.3 20z" fill="#3b5ba4"/>
</svg>
<svg class="abs" style="left:1711px;top:9px" width="28" height="28" viewBox="0 0 28 28">
 <path d="M0 1.3h7.5v12.5H0z" fill="#3e3a3a"/>
 <path d="M0 13.8h14.8l3.4-5.9 9.6 10-9.6 10v-6.2H8.2z" fill="#8f8f90"/><path d="M14.8 13.8l3.4-5.9 9.6 10-9.6 10v-6.2z" fill="#a6a6ac"/>
</svg>
<div class="abs" style="left:1747px;top:7px;width:2px;height:32px;background:#d6d9de"></div>
<svg class="abs" style="left:1756px;top:9px" width="29" height="29" viewBox="0 0 29 29">
 <rect width="24" height="24" fill="#8f8f90"/><path d="M0 0h24v24z" fill="#a3a3a7"/>
 <rect x="2.5" y="2.5" width="19" height="19" fill="none" stroke="#f4f4f6" stroke-width="2" stroke-dasharray="3 3"/>
 <circle cx="19.7" cy="19.8" r="7.8" fill="#2a2a2e"/><rect x="14" y="18.2" width="12" height="3.4" fill="#fff"/>
</svg>
<div class="abs" style="left:1792px;top:7px;width:2px;height:32px;background:#d6d9de"></div>
<svg class="abs" style="left:1801px;top:9px" width="28" height="28" viewBox="0 0 28 28">
 <rect width="28" height="28" fill="#58b9c0"/><path d="M0 0h28v28z" fill="#80d3dd"/>
 <g fill="#24427e"><rect x="2.6" y="2" width="2.6" height="24"/><rect x="9.3" y="2" width="2.6" height="24"/><rect x="15.6" y="2" width="2.6" height="24"/><rect x="22.2" y="2" width="2.6" height="24"/>
 <rect x="2" y="2.6" width="24" height="2.6"/><rect x="2" y="8.9" width="24" height="2.6"/><rect x="2" y="15.1" width="24" height="2.6"/><rect x="2" y="21.7" width="24" height="2.6"/></g>
</svg>
<svg class="abs" style="left:1839px;top:9px" width="29" height="29" viewBox="0 0 29 29">
 <path d="M19 19L26.5 26.5" stroke="#58b9c0" stroke-width="4.2"/>
 <circle cx="12" cy="11.5" r="12" fill="#6dcbd6"/><circle cx="12" cy="11.5" r="9.6" fill="#fff"/>
 <text x="12" y="15.8" text-anchor="middle" font-family="Liberation Sans" font-weight="bold" font-size="10.5" fill="#1e3b78">1:1</text>
</svg>
<div class="abs" style="left:1875px;top:7px;width:2px;height:32px;background:#d6d9de"></div>
<svg class="abs" style="left:1884px;top:9px" width="28" height="28" viewBox="0 0 28 28">
 <path d="M0 0h20.5l7.5 7.5V28H0z" fill="#58b9c0"/><path d="M0 0h20.5l7.5 7.5V28z" fill="#80d3dd"/><path d="M20.5 0l7.5 7.5h-7.5z" fill="#3b5ba4"/>
 <path d="M4 3.5Q7 1.5 10.5 3.5Q13 6 11.5 9.5L26 22.5L23.5 25L10 11Q6.5 12.5 3.5 10.5L8 9L9 6z" fill="#3b5ba4"/>
</svg>

<!-- tabs -->
<div class="abs" style="left:0;top:46px;width:45px;height:32px;background:#3b3f50"></div>
<svg class="abs" style="left:10px;top:50px" width="24" height="24" viewBox="0 0 24 24"><use href="#ihome"/></svg>
<div class="abs" style="left:45px;top:46px;width:145px;height:32px;background:#88c1d0"></div>
<div class="t" style="left:55px;top:55px;font-size:15px;color:#2b2f3c">Single Joystick</div>
<svg class="x" style="left:172px;top:57px;color:#2b2f3c" viewBox="0 0 10 10"><use href="#ix"/></svg>
<div class="abs" style="left:190px;top:46px;width:206px;height:32px;background:#3b3f50"></div>
<div class="t" style="left:201px;top:55px;font-size:15px;color:#f0f2f6">Single Joystick (Events)</div>
<svg class="x" style="left:378px;top:57px;color:#f0f2f6" viewBox="0 0 10 10"><use href="#ix"/></svg>

<!-- left properties panel -->
<div class="panel" style="left:0;top:78px;width:331px;height:689px"></div>
<div class="hdr" style="left:2px;top:78px;width:325px"><div class="t" style="left:15px;top:8px;font-size:15.0px;letter-spacing:-0.137px">Properties</div></div>
<svg class="x" style="left:306px;top:89px;color:#fff" viewBox="0 0 10 10"><use href="#ix"/></svg>
<div class="t" style="left:0;top:421px;width:329px;text-align:center;font-size:14.3px;letter-spacing:0.027px;color:#abafb8">Click on an instance in the scene to display its</div><div class="t" style="left:0;top:441px;width:329px;text-align:center;font-size:14.3px;letter-spacing:0.141px;color:#abafb8">properties</div>


<!-- canvas -->
<div class="abs" style="left:331px;top:78px;width:1203px;height:687px;background:#002862"></div>
<div class="abs" style="left:331px;top:78px;width:1203px;height:2px;background:#386b8e"></div>
<div class="abs" style="left:331px;top:78px;width:672px;height:2px;background:#8ccbdc"></div>
<div class="abs" style="left:331px;top:78px;width:2px;height:687px;background:#386b8e"></div>
<div class="abs" style="left:331px;top:78px;width:2px;height:369px;background:#8ccbdc"></div>
<div class="abs" style="left:991px;top:78px;width:12px;height:7px;border-radius:0 0 6px 6px;background:#8ccbdc"></div>
<div class="abs" style="left:326px;top:441px;width:12px;height:12px;border-radius:6px;background:#8ccbdc"></div><div class="abs" style="left:328px;top:373px;width:2px;height:99px;background:#8c8e93"></div><div class="abs" style="left:0;top:78px;width:331px;height:0"></div>
<div class="abs" style="left:495px;top:131px;width:875px;height:583px;border:1px solid #7dd3a2"></div>
<div class="abs" style="left:1160px;top:518px;width:162px;height:162px;border-radius:50%;background:linear-gradient(135deg,#f6f7f9,#d3d6de)"></div>
<div class="abs" style="left:1170px;top:528px;width:141px;height:141px;border-radius:50%;background:#c2c2c2"></div>
<svg class="abs" style="left:876px;top:392px" width="14" height="20" viewBox="0 0 14 20"><path d="M0.5 0.5V17l4-3.5 3 6 2.5-1.2-3-5.8h5.5z" fill="#fff" stroke="#000" stroke-width="1"/></svg>
<div class="abs" style="left:333px;top:740px;width:63px;height:25px;background:#020f20"></div>
<div class="t" style="left:336px;top:745px;font-size:15px;color:#dcdee2">227;288</div>

<!-- right objects panel -->
<div class="panel" style="left:1534px;top:78px;width:386px;height:689px"></div>
<div class="abs" style="left:1535px;top:373px;width:2px;height:99px;background:#8c8e93"></div>
<div class="hdr" style="left:1538px;top:78px;width:380px"><div class="t" style="left:15px;top:8px;font-size:15.0px;letter-spacing:-0.179px">Objects</div></div>
<svg class="abs" style="left:1862px;top:88px" width="14" height="12" viewBox="0 0 14 12"><rect x="2" y="2" width="12" height="1.6" fill="#fff"/><rect x="4" y="5.6" width="8" height="1.6" fill="#fff"/><rect x="6.5" y="8.8" width="3" height="1.6" fill="#fff"/></svg>
<svg class="x" style="left:1897px;top:89px;color:#fff" viewBox="0 0 10 10"><use href="#ix"/></svg>
<div class="abs" style="left:1554px;top:113px;width:24px;height:24px;border-radius:50%;border:2px solid #d8dade"></div><div class="t" style="left:1610px;top:117px;font-size:14.3px;letter-spacing:0.300px;color:#eceef2">JoystickLeft</div><svg class="abs" style="left:1896px;top:117px" width="4" height="16" viewBox="0 0 4 16"><use href="#idots"/></svg><div class="sep" style="left:1538px;top:140px;width:380px"></div>
<div class="abs" style="left:1554px;top:145px;width:24px;height:24px;border-radius:50%;background:#c6c6c8;border:1.5px solid #eceef0"></div><div class="t" style="left:1610px;top:149px;font-size:14.3px;letter-spacing:0.003px;color:#eceef2">JoystickButton_Explode</div><svg class="abs" style="left:1896px;top:149px" width="4" height="16" viewBox="0 0 4 16"><use href="#idots"/></svg><div class="sep" style="left:1538px;top:172px;width:380px"></div>
<div class="abs" style="left:1554px;top:177px;width:24px;height:24px;border-radius:50%;background:#c6c6c8;border:1.5px solid #eceef0"></div><div class="t" style="left:1610px;top:181px;font-size:14.3px;letter-spacing:0.018px;color:#eceef2">JoystickButton_Gun</div><svg class="abs" style="left:1896px;top:181px" width="4" height="16" viewBox="0 0 4 16"><use href="#idots"/></svg><div class="sep" style="left:1538px;top:204px;width:380px"></div>
<div class="abs" style="left:1554px;top:209px;width:24px;height:24px;border-radius:50%;background:#b9b0b0;border:2px solid #f2f2f4"></div><div class="t" style="left:1610px;top:213px;font-size:14.3px;letter-spacing:0.118px;color:#eceef2">JoystickThumbPad</div><svg class="abs" style="left:1896px;top:213px" width="4" height="16" viewBox="0 0 4 16"><use href="#idots"/></svg><div class="sep" style="left:1538px;top:236px;width:380px"></div>
<svg class="abs" style="left:1554px;top:237px" width="26" height="30" viewBox="0 0 26 30"><path d="M0.5 13.5Q1.5 8 7.5 8Q11 8.3 11.5 10.5L9.5 13Q4 15 0.5 13.5z" fill="#e6e6ea"/><path d="M2 17L9 14.3L23.5 17L9 20z" fill="#ededf0"/><path d="M0.5 20.5Q4 19 9.5 21L11.5 23.5Q11 26.5 7.5 27Q1.5 27 0.5 20.5z" fill="#e6e6ea"/></svg><div class="t" style="left:1610px;top:245px;font-size:14.3px;letter-spacing:-0.065px;color:#eceef2">Spaceship</div><svg class="abs" style="left:1896px;top:245px" width="4" height="16" viewBox="0 0 4 16"><use href="#idots"/></svg><div class="sep" style="left:1538px;top:268px;width:380px"></div>
<svg class="abs" style="left:1554px;top:273px" width="24" height="24" viewBox="0 0 24 24"><path d="M12 0L24 12 12 24 0 12z" fill="#fff"/></svg><div class="t" style="left:1610px;top:277px;font-size:14.3px;letter-spacing:-0.057px;color:#eceef2">Star</div><svg class="abs" style="left:1896px;top:277px" width="4" height="16" viewBox="0 0 4 16"><use href="#idots"/></svg><div class="sep" style="left:1538px;top:300px;width:380px"></div>
<div class="abs" style="left:1560px;top:311px;width:12.5px;height:12.5px;border-radius:50%;background:#fff"></div><div class="t" style="left:1610px;top:309px;font-size:14.3px;letter-spacing:0.005px;color:#eceef2">Bullet</div><svg class="abs" style="left:1896px;top:309px" width="4" height="16" viewBox="0 0 4 16"><use href="#idots"/></svg><div class="sep" style="left:1538px;top:332px;width:380px"></div>
<svg class="abs" style="left:1555px;top:338px" width="22" height="22" viewBox="0 0 24 24"><use href="#itx"/></svg><div class="t" style="left:1610px;top:341px;font-size:13.55px;letter-spacing:0.027px;font-weight:bold;font-style:italic;color:#eceef2">SingleJoystick_Text</div><svg class="abs" style="left:1896px;top:341px" width="4" height="16" viewBox="0 0 4 16"><use href="#idots"/></svg><div class="sep" style="left:1538px;top:364px;width:380px"></div>
<svg class="abs" style="left:1555px;top:370px" width="22" height="22" viewBox="0 0 24 24"><use href="#itx"/></svg><div class="t" style="left:1610px;top:373px;font-size:13.55px;letter-spacing:-0.023px;font-weight:bold;font-style:italic;color:#eceef2">SingleJoystickWithButtons_Text</div><svg class="abs" style="left:1896px;top:373px" width="4" height="16" viewBox="0 0 4 16"><use href="#idots"/></svg><div class="sep" style="left:1538px;top:396px;width:380px"></div>
<svg class="abs" style="left:1555px;top:402px" width="22" height="22" viewBox="0 0 24 24"><use href="#itx"/></svg><div class="t" style="left:1610px;top:405px;font-size:13.55px;letter-spacing:0.018px;font-weight:bold;font-style:italic;color:#eceef2">DualJoystick_Text</div><svg class="abs" style="left:1896px;top:405px" width="4" height="16" viewBox="0 0 4 16"><use href="#idots"/></svg><div class="sep" style="left:1538px;top:428px;width:380px"></div>
<div class="abs" style="left:1554px;top:433px;width:24px;height:24px;background:#2fef8f"></div><div class="t" style="left:1610px;top:437px;font-size:13.55px;letter-spacing:-0.074px;font-weight:bold;font-style:italic;color:#eceef2">Button</div><svg class="abs" style="left:1896px;top:437px" width="4" height="16" viewBox="0 0 4 16"><use href="#idots"/></svg><div class="sep" style="left:1538px;top:460px;width:380px"></div>
<div class="t" style="left:1665px;top:469px;font-size:14.3px;letter-spacing:-0.051px;color:#b9bdc7">Add a new object</div><svg class="abs" style="left:1890px;top:468px" width="16" height="16" viewBox="0 0 16 16"><path d="M8 1v14M1 8h14" stroke="#fff" stroke-width="1.6"/></svg>
<div class="abs" style="left:1538px;top:737px;width:380px;height:28px;background:#4c5567"></div>
<div class="t" style="left:1546px;top:744px;font-size:16px;color:#a4a8b2">Search objects</div>
<svg class="abs" style="left:1891px;top:741px" width="21" height="21" viewBox="0 0 24 24"><use href="#isearch"/></svg>

<!-- bottom panels -->
<div class="panel" style="left:0;top:765px;width:1920px;height:232px"></div>
<div class="hdr" style="left:2px;top:767px;width:886px"><div class="t" style="left:15px;top:8px;font-size:15.0px;letter-spacing:-0.193px">Instances list</div></div>
<svg class="x" style="left:867px;top:778px;color:#fff" viewBox="0 0 10 10"><use href="#ix"/></svg>
<div class="t" style="left:12px;top:806.5px;font-size:11.5px;font-weight:bold;color:#e3e5ea">Object name</div>
<div class="t" style="left:354px;top:806.5px;font-size:11.5px;font-weight:bold;color:#e3e5ea">X</div>
<div class="t" style="left:445px;top:806.5px;font-size:11.5px;font-weight:bold;color:#e3e5ea">Y</div>
<div class="t" style="left:536px;top:806.5px;font-size:11.5px;font-weight:bold;color:#e3e5ea">Angle</div>
<div class="t" style="left:626px;top:806.5px;font-size:11.5px;font-weight:bold;color:#e3e5ea">Layer</div>
<div class="t" style="left:797px;top:806.5px;font-size:11.5px;font-weight:bold;color:#e3e5ea">Z Order</div>
<div class="abs" style="left:2px;top:828px;width:886px;height:32px;background:#2e323f"></div>
<div class="t" style="left:12px;top:840px;font-size:12.5px;color:#eef0f4">JoystickButton_Gun</div>
<svg class="abs" style="left:310px;top:834px" width="18" height="19" viewBox="0 0 18 19"><path d="M4 8V5a5 5 0 0 1 10 0" stroke="#fff" stroke-width="1.8" fill="none"/><rect x="2" y="8" width="14" height="10" rx="1" stroke="#fff" stroke-width="1.8" fill="none"/><circle cx="9" cy="13" r="1.6" fill="#fff"/></svg>
<div class="t" style="left:354px;top:840px;font-size:12.5px;color:#eef0f4">821.00</div>
<div class="t" style="left:445px;top:840px;font-size:12.5px;color:#eef0f4">478.00</div>
<div class="t" style="left:536px;top:840px;font-size:12.5px;color:#eef0f4">0.00</div>
<div class="t" style="left:626px;top:840px;font-size:12.5px;color:#eef0f4">UI</div>
<div class="t" style="left:797px;top:840px;font-size:12.5px;color:#eef0f4">1</div>
<div class="abs" style="left:889px;top:832px;width:2px;height:100px;background:#8c8e93"></div>
<div class="abs" style="left:2px;top:967px;width:886px;height:30px;background:#4c5567"></div>
<div class="t" style="left:10px;top:974px;font-size:16px;color:#a4a8b2">Search instances</div>
<svg class="abs" style="left:862px;top:972px" width="21" height="21" viewBox="0 0 24 24"><use href="#isearch"/></svg>

<div class="abs" style="left:910px;top:765px;width:100px;height:2px;background:linear-gradient(#55575e,#97989c)"></div>
<!-- layers -->
<div class="hdr" style="left:892px;top:767px;width:645px"><div class="t" style="left:15px;top:8px;font-size:15.0px;letter-spacing:-0.671px">Layers</div></div>
<svg class="x" style="left:1516px;top:778px;color:#fff" viewBox="0 0 10 10"><use href="#ix"/></svg>
<div class="abs" style="left:892px;top:797px;width:645px;height:88px;background:#4a5467"></div>
<svg class="abs" style="left:900px;top:807px;color:#fff" width="16" height="10" viewBox="0 0 16 10"><use href="#ihandle"/></svg>
<div class="t" style="left:928px;top:804px;font-size:16px;color:#e6e8ee">UI</div>
<div class="abs" style="left:928px;top:822px;width:465px;height:1px;background:#e3e6ec"></div>
<svg class="abs" style="left:1410px;top:800px" width="24" height="24" viewBox="0 0 24 24"><use href="#ieye"/></svg>
<svg class="abs" style="left:1446px;top:800px" width="24" height="24" viewBox="0 0 24 24"><use href="#isun"/></svg>
<svg class="abs" style="left:1476px;top:800px" width="24" height="24" viewBox="0 0 24 24"><use href="#ipen"/></svg>
<svg class="abs" style="left:1510px;top:803px" width="14" height="18" viewBox="0 0 14 18"><path d="M1 2h12v2H1zM4 0h6v2H4zM2 5h10v13H2z" fill="#eef0f4"/></svg><svg class="abs" style="left:1510px;top:833px;opacity:.35" width="14" height="18" viewBox="0 0 14 18"><path d="M1 2h12v2H1zM4 0h6v2H4zM2 5h10v13H2z" fill="#eef0f4"/></svg>
<svg class="abs" style="left:900px;top:837px;color:#fff" width="16" height="10" viewBox="0 0 16 10"><use href="#ihandle"/></svg>
<div class="t" style="left:928px;top:834px;font-size:16px;color:#e6e8ee">Base layer</div>
<div class="abs" style="left:928px;top:852px;width:465px;height:1px;background:repeating-linear-gradient(90deg,#e3e6ec 0 1px,transparent 1px 2px)"></div>
<svg class="abs" style="left:1410px;top:830px" width="24" height="24" viewBox="0 0 24 24"><use href="#ieye"/></svg>
<svg class="abs" style="left:1446px;top:830px" width="24" height="24" viewBox="0 0 24 24"><use href="#isun"/></svg>
<svg class="abs" style="left:1476px;top:830px" width="24" height="24" viewBox="0 0 24 24"><use href="#ipen"/></svg>
<svg class="abs" style="left:900px;top:866px;color:#8d939e" width="16" height="10" viewBox="0 0 16 10"><use href="#ihandle"/></svg>
<div class="t" style="left:928px;top:863px;font-size:16px;color:#e6e8ee">Background color</div>
<div class="abs" style="left:928px;top:881px;width:552px;height:1px;background:repeating-linear-gradient(90deg,#e3e6ec 0 1px,transparent 1px 2px)"></div>
<div class="abs" style="left:1487px;top:857px;width:46px;height:24px;background:#fff"></div>
<div class="abs" style="left:1492px;top:862px;width:36px;height:14px;border-radius:2px;background:#002350"></div>
<div class="abs" style="left:1353px;top:893px;width:175px;height:32px;background:#88c1d0;box-shadow:0 1px 3px rgba(0,0,0,.35)"></div>
<div class="abs" style="left:1484px;top:893px;width:1px;height:32px;background:#7ab2c0"></div>
<svg class="abs" style="left:1367px;top:901px" width="16" height="16" viewBox="0 0 16 16"><path d="M8 1v14M1 8h14" stroke="#fff" stroke-width="2"/></svg>
<div class="t" style="left:1395px;top:904px;font-size:11.8px;font-weight:bold;color:#fff">ADD A LAYER</div>
<svg class="abs" style="left:1500px;top:905px" width="12" height="8" viewBox="0 0 12 8"><path d="M1 1h10L6 6z" fill="#fff"/></svg>

<div class="abs" style="left:1538px;top:832px;width:2px;height:100px;background:#8c8e93"></div>
<!-- object groups -->
<div class="hdr" style="left:1541px;top:767px;width:377px"><div class="t" style="left:15.6px;top:8px;font-size:15.0px;letter-spacing:-0.170px">Object Groups</div></div>
<svg class="x" style="left:1897px;top:778px;color:#fff" viewBox="0 0 10 10"><use href="#ix"/></svg>
<div class="t" style="left:1557px;top:805px;font-size:14.5px;color:#eef0f4">Joysticks</div>
<svg class="abs" style="left:1896px;top:804px" width="4" height="16" viewBox="0 0 4 16"><use href="#idots"/></svg>
<div class="sep" style="left:1541px;top:826px;width:377px"></div>
<div class="t" style="left:1557px;top:834px;font-size:14.5px;color:#eef0f4">Buttons</div>
<svg class="abs" style="left:1896px;top:833px" width="4" height="16" viewBox="0 0 4 16"><use href="#idots"/></svg>
<div class="sep" style="left:1541px;top:855px;width:377px"></div>
<div class="t" style="left:1668px;top:864px;font-size:14.5px;color:#b9bdc7">Add a new group</div>
<svg class="abs" style="left:1890px;top:863px" width="16" height="16" viewBox="0 0 16 16"><path d="M8 1v14M1 8h14" stroke="#fff" stroke-width="1.6"/></svg>
<div class="abs" style="left:1541px;top:967px;width:377px;height:30px;background:#4c5567"></div>
<div class="t" style="left:1546px;top:974px;font-size:16px;color:#a4a8b2">Search object groups</div>
<svg class="abs" style="left:1891px;top:971px" width="21" height="21" viewBox="0 0 24 24"><use href="#isearch"/></svg>
<div class="abs" style="left:1831px;top:105px;width:24px;height:24px;border-radius:50%;background:#5a5e66"></div><div class="abs" style="left:1831px;top:131px;width:24px;height:24px;border-radius:50%;background:#5a5e66"></div><div class="abs" style="left:1831px;top:157px;width:24px;height:24px;border-radius:50%;background:#5a5e66"></div><div class="abs" style="left:1831px;top:239px;width:24px;height:24px;border-radius:50%;background:#5a5e66"></div><div class="abs" style="left:1831px;top:263px;width:24px;height:24px;border-radius:50%;background:#5a5e66"></div><div class="abs" style="left:1831px;top:287px;width:24px;height:24px;border-radius:50%;background:#5a5e66"></div></div>
<div class="abs" style="left:0;top:0;width:402px;height:210px;box-shadow:inset 0 0 0 1px rgba(25,27,33,.85)"></div>
</div>
</body></html>
